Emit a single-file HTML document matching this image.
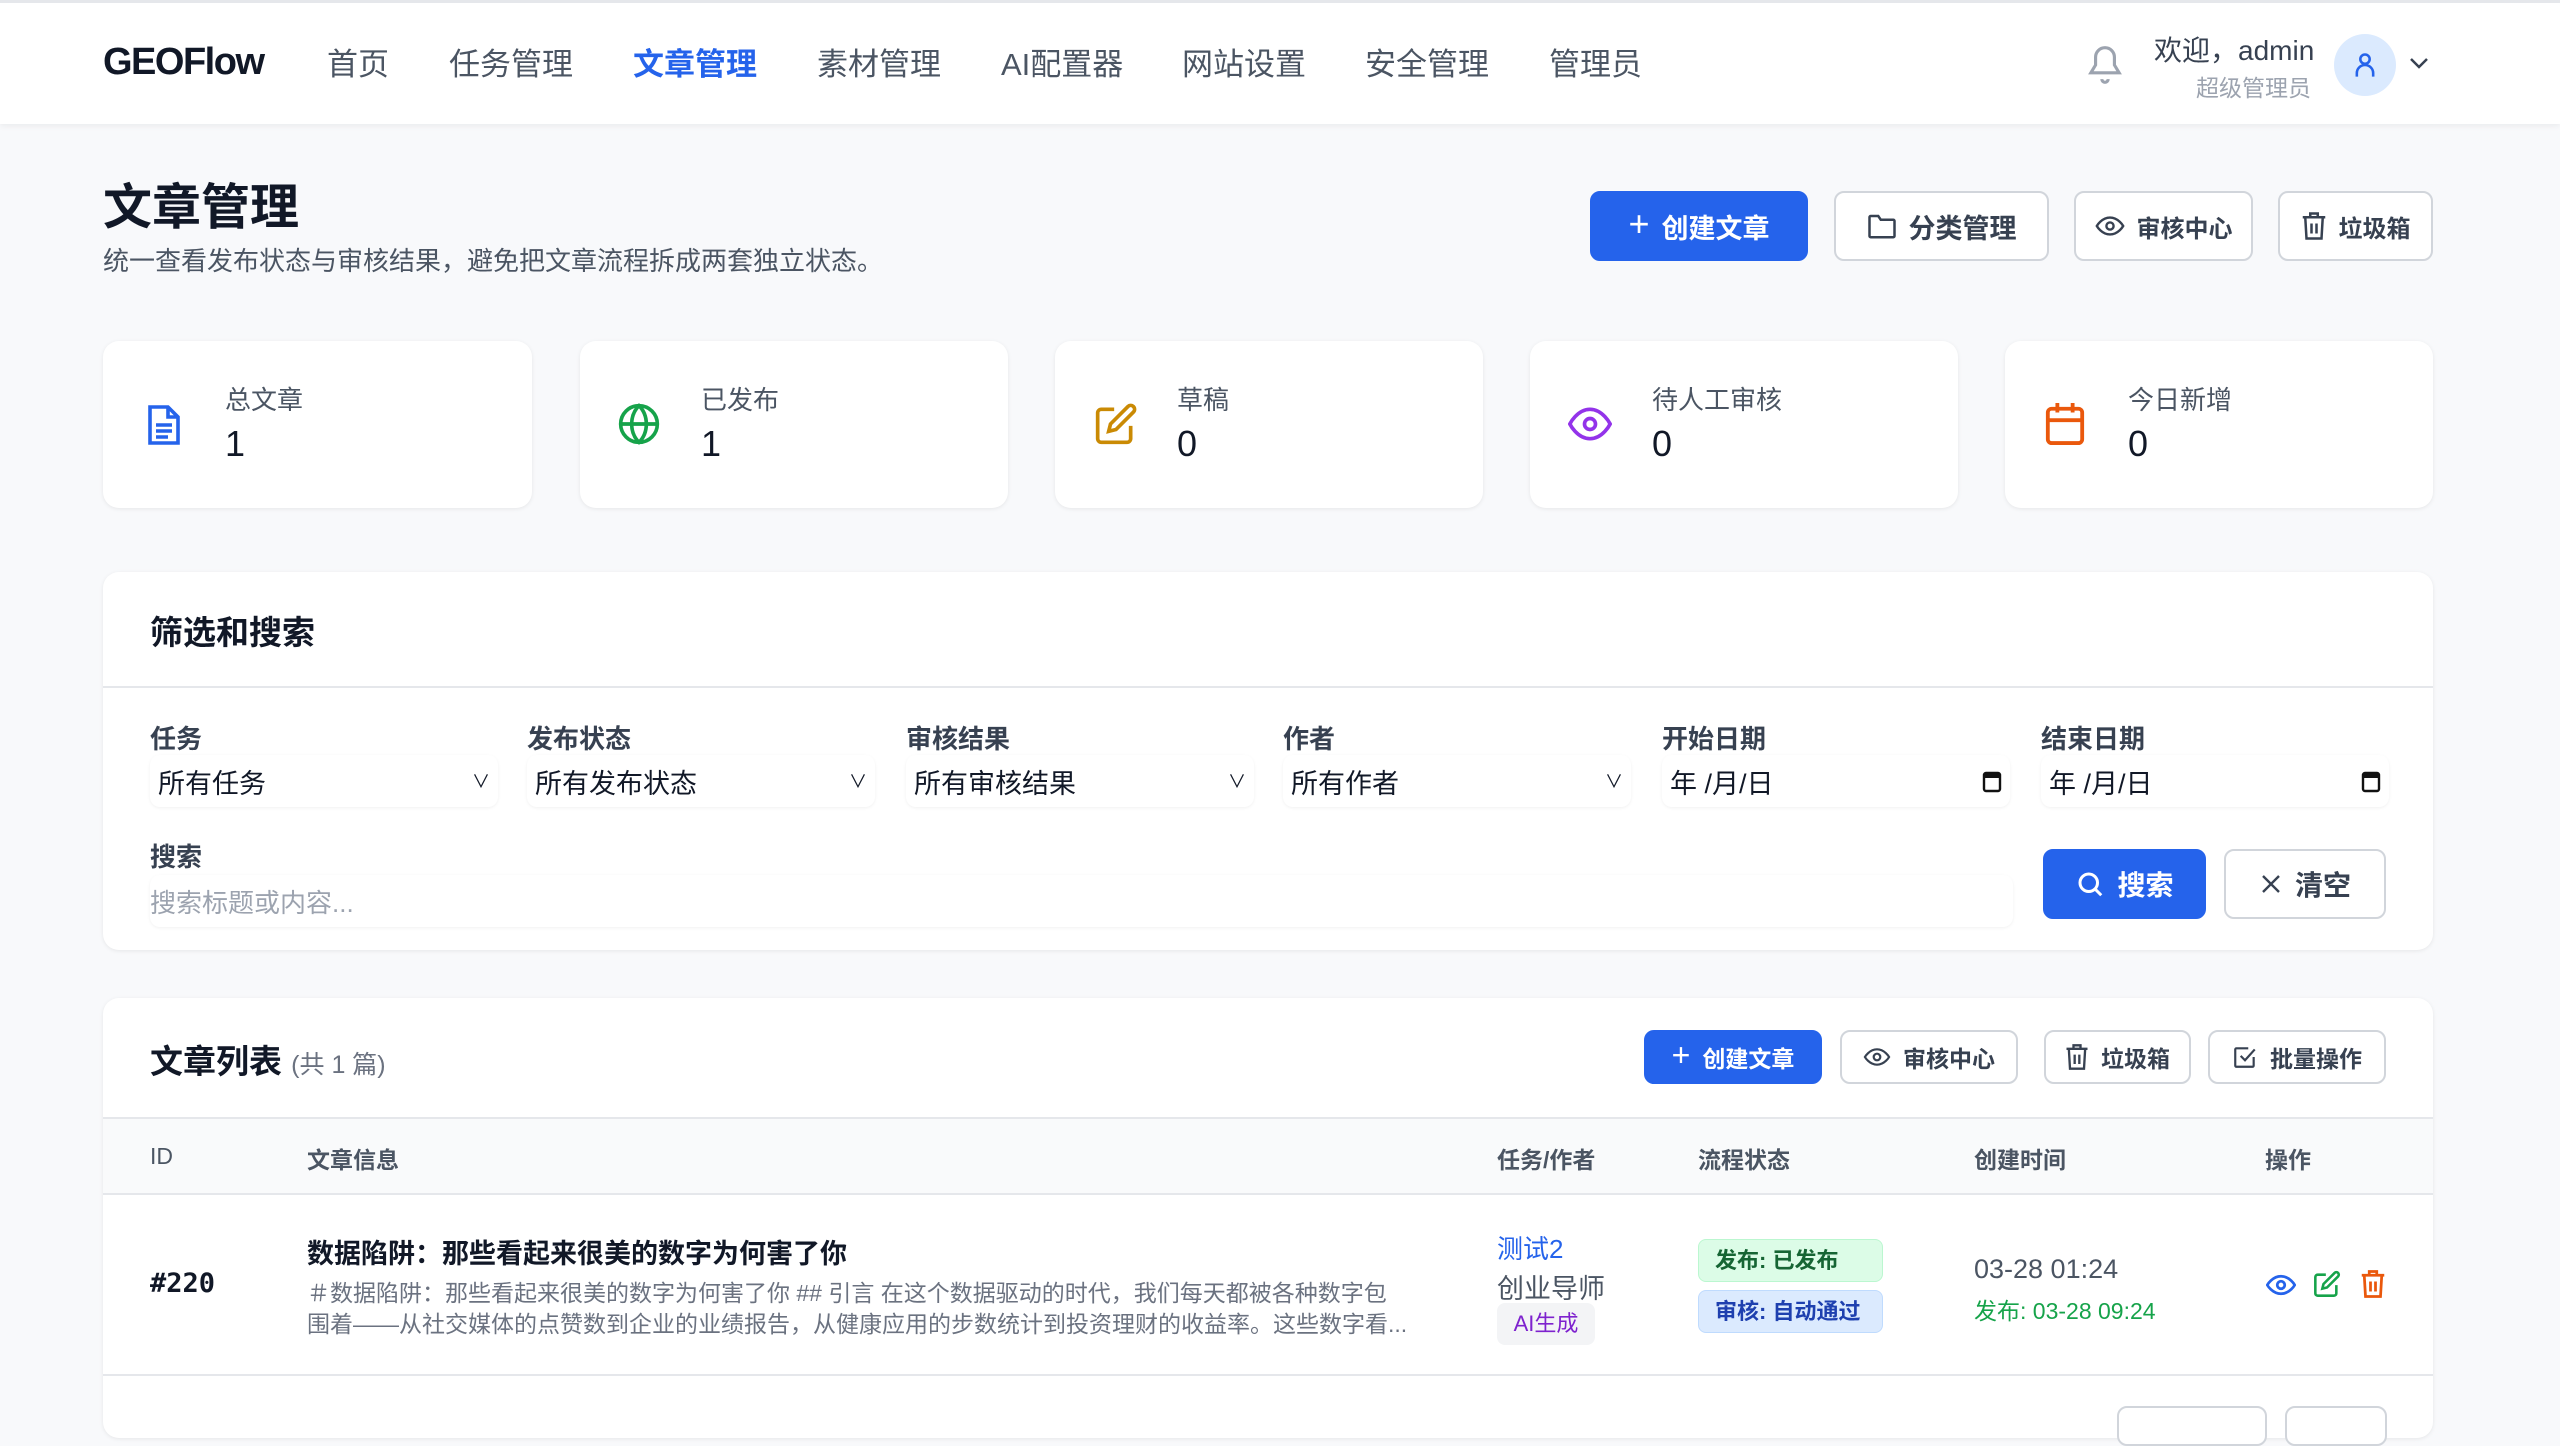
<!DOCTYPE html>
<html><head><meta charset="utf-8">
<style>
*{box-sizing:border-box;margin:0;padding:0}
body{width:2560px;height:1416px;overflow:hidden;background:#f8f9fb;font-family:"Liberation Sans","Noto Sans CJK SC",sans-serif;color:#111827;position:relative}
.a{position:absolute;white-space:nowrap}
.nav{position:absolute;left:0;top:0;width:2560px;height:124px;background:#fff;border-top:3px solid #e5e7eb;box-shadow:0 2px 6px rgba(0,0,0,.06)}
.ni{position:absolute;top:40px;font-size:31px;color:#4b5563;line-height:44px}
.card{position:absolute;background:#fff;border-radius:16px;box-shadow:0 1px 4px rgba(0,0,0,.08)}
.btn{position:absolute;border-radius:10px;border:2px solid #d1d5db;background:#fff;display:flex;align-items:center;justify-content:center;gap:12px;font-weight:700;color:#374151}
.btn.p{background:#2563eb;border-color:#2563eb;color:#fff}
.lbl{position:absolute;font-size:26px;font-weight:700;color:#374151}
.sel{position:absolute;height:52px;border-radius:10px;box-shadow:0 1px 3px rgba(0,0,0,.06);font-size:27px;color:#111827;padding:0 8px;display:flex;align-items:center;justify-content:space-between}
.th{position:absolute;top:1141px;font-size:23px;color:#4b5563;font-weight:700}
svg{display:block}
</style></head><body>
<div class="nav">
  <div class="a" style="left:103px;top:38px;font-size:38px;font-weight:700;color:#111827;letter-spacing:-1.5px">GEOFlow</div>
  <div class="ni" style="left:327px">首页</div>
  <div class="ni" style="left:449px">任务管理</div>
  <div class="ni" style="left:633px;color:#2563eb;font-weight:700">文章管理</div>
  <div class="ni" style="left:817px">素材管理</div>
  <div class="ni" style="left:1001px">AI配置器</div>
  <div class="ni" style="left:1182px">网站设置</div>
  <div class="ni" style="left:1365px">安全管理</div>
  <div class="ni" style="left:1549px">管理员</div>
  <svg class="a" style="left:2086px;top:40px" width="38" height="44" viewBox="0 0 24 28" fill="none" stroke="#9ca3af" stroke-width="2"><path d="M12 3a6 6 0 0 0-6 6v5l-3 5h18l-3-5V9a6 6 0 0 0-6-6z"/><path d="M10 23a2 2 0 0 0 4 0"/></svg>
  <div class="a" style="left:2154px;top:26px;font-size:28px;color:#374151">欢迎，admin</div>
  <div class="a" style="left:2196px;top:66px;font-size:23px;color:#9ca3af">超级管理员</div>
  <div class="a" style="left:2334px;top:31px;width:62px;height:62px;border-radius:50%;background:#dbeafe"></div>
  <svg class="a" style="left:2351px;top:48px" width="28" height="28" viewBox="0 0 24 24" fill="none" stroke="#2563eb" stroke-width="2.2"><circle cx="12" cy="7" r="4"/><path d="M5 22v-3a7 7 0 0 1 14 0v3"/></svg>
  <svg class="a" style="left:2408px;top:52px" width="22" height="16" viewBox="0 0 22 16" fill="none" stroke="#374151" stroke-width="2.5"><path d="M3 4l8 8 8-8"/></svg>
</div>

<div class="a" style="left:103px;top:168px;font-size:49px;font-weight:700">文章管理</div>
<div class="a" style="left:103px;top:241px;font-size:26px;color:#4b5563">统一查看发布状态与审核结果，避免把文章流程拆成两套独立状态。</div>

<div class="btn p" style="left:1590px;top:191px;width:218px;height:70px;font-size:27px"><span style="font-size:36px;font-weight:400;margin-top:-4px">+</span>创建文章</div>
<div class="btn" style="left:1834px;top:191px;width:215px;height:70px;font-size:27px"><svg width="30" height="28" viewBox="0 0 24 22" fill="none" stroke="#374151" stroke-width="2"><path d="M2 4a1 1 0 0 1 1-1h6l2 3h10a1 1 0 0 1 1 1v12a1 1 0 0 1-1 1H3a1 1 0 0 1-1-1z"/></svg>分类管理</div>
<div class="btn" style="left:2074px;top:191px;width:179px;height:70px;font-size:24px"><svg width="30" height="24" viewBox="0 0 24 20" fill="none" stroke="#374151" stroke-width="2"><path d="M1 10s4-7 11-7 11 7 11 7-4 7-11 7S1 10 1 10z"/><circle cx="12" cy="10" r="3"/></svg>审核中心</div>
<div class="btn" style="left:2278px;top:191px;width:155px;height:70px;font-size:24px"><svg width="26" height="30" viewBox="0 0 20 24" fill="none" stroke="#374151" stroke-width="2"><path d="M1 5h18M7 5V2h6v3M3 5l1 17h12l1-17M8 10v8M12 10v8"/></svg>垃圾箱</div>

<div class="card" style="left:103px;top:341px;width:429px;height:167px"></div>
<div class="card" style="left:580px;top:341px;width:428px;height:167px"></div>
<div class="card" style="left:1055px;top:341px;width:428px;height:167px"></div>
<div class="card" style="left:1530px;top:341px;width:428px;height:167px"></div>
<div class="card" style="left:2005px;top:341px;width:428px;height:167px"></div>

<svg class="a" style="left:146px;top:403px" width="36" height="44" viewBox="0 0 18 22" fill="none" stroke="#2563eb" stroke-width="1.8"><path d="M2 2h9l5 5v13H2z"/><path d="M11 2v5h5M5 11h8M5 14h8M5 17h6"/></svg>
<div class="a" style="left:225px;top:380px;font-size:26px;color:#4b5563">总文章</div>
<div class="a" style="left:225px;top:423px;font-size:36px">1</div>

<svg class="a" style="left:617px;top:402px" width="44" height="44" viewBox="0 0 24 24" fill="none" stroke="#16a34a" stroke-width="2"><circle cx="12" cy="12" r="10"/><path d="M2 12h20M12 2c3 3 4 6.5 4 10s-1 7-4 10c-3-3-4-6.5-4-10s1-7 4-10z"/></svg>
<div class="a" style="left:701px;top:380px;font-size:26px;color:#4b5563">已发布</div>
<div class="a" style="left:701px;top:423px;font-size:36px">1</div>

<svg class="a" style="left:1094px;top:402px" width="44" height="44" viewBox="0 0 24 24" fill="none" stroke="#ca8a04" stroke-width="2"><path d="M11 4H4a2 2 0 0 0-2 2v14a2 2 0 0 0 2 2h14a2 2 0 0 0 2-2v-7"/><path d="M18.5 2.5a2.1 2.1 0 0 1 3 3L12 15l-4 1 1-4z"/></svg>
<div class="a" style="left:1177px;top:380px;font-size:26px;color:#4b5563">草稿</div>
<div class="a" style="left:1177px;top:423px;font-size:36px">0</div>

<svg class="a" style="left:1568px;top:402px" width="44" height="44" viewBox="0 0 24 24" fill="none" stroke="#9333ea" stroke-width="2"><path d="M1 12s4-8 11-8 11 8 11 8-4 8-11 8-11-8-11-8z"/><circle cx="12" cy="12" r="3"/></svg>
<div class="a" style="left:1652px;top:380px;font-size:26px;color:#4b5563">待人工审核</div>
<div class="a" style="left:1652px;top:423px;font-size:36px">0</div>

<svg class="a" style="left:2044px;top:401px" width="42" height="46" viewBox="0 0 22 24" fill="none" stroke="#ea580c" stroke-width="2"><rect x="2" y="4" width="18" height="18" rx="2"/><path d="M2 10h18M7 1v5M15 1v5"/></svg>
<div class="a" style="left:2128px;top:380px;font-size:26px;color:#4b5563">今日新增</div>
<div class="a" style="left:2128px;top:423px;font-size:36px">0</div>

<div class="card" style="left:103px;top:572px;width:2330px;height:378px"></div>
<div class="a" style="left:150px;top:606px;font-size:33px;font-weight:700">筛选和搜索</div>
<div class="a" style="left:103px;top:686px;width:2330px;height:2px;background:#e5e7eb"></div>

<div class="lbl" style="left:150px;top:719px">任务</div>
<div class="lbl" style="left:527px;top:719px">发布状态</div>
<div class="lbl" style="left:906px;top:719px">审核结果</div>
<div class="lbl" style="left:1283px;top:719px">作者</div>
<div class="lbl" style="left:1662px;top:719px">开始日期</div>
<div class="lbl" style="left:2041px;top:719px">结束日期</div>

<div class="sel" style="left:150px;top:755px;width:348px">所有任务<span style="font-size:18px">∨</span></div>
<div class="sel" style="left:527px;top:755px;width:348px">所有发布状态<span style="font-size:18px">∨</span></div>
<div class="sel" style="left:906px;top:755px;width:348px">所有审核结果<span style="font-size:18px">∨</span></div>
<div class="sel" style="left:1283px;top:755px;width:348px">所有作者<span style="font-size:18px">∨</span></div>
<div class="sel" style="left:1662px;top:755px;width:348px">年 /月/日<svg width="20" height="24" viewBox="0 0 20 24"><rect x="2" y="4" width="16" height="18" rx="2" fill="none" stroke="#111" stroke-width="2.4"/><rect x="2" y="4" width="16" height="5" fill="#111"/></svg></div>
<div class="sel" style="left:2041px;top:755px;width:348px">年 /月/日<svg width="20" height="24" viewBox="0 0 20 24"><rect x="2" y="4" width="16" height="18" rx="2" fill="none" stroke="#111" stroke-width="2.4"/><rect x="2" y="4" width="16" height="5" fill="#111"/></svg></div>

<div class="lbl" style="left:150px;top:837px">搜索</div>
<div class="sel" style="left:150px;top:875px;width:1863px;color:#9ca3af;font-size:26px;padding-left:0">搜索标题或内容...</div>

<div class="btn p" style="left:2043px;top:849px;width:163px;height:70px;font-size:28px"><svg width="30" height="30" viewBox="0 0 24 24" fill="none" stroke="#fff" stroke-width="2.4"><circle cx="11" cy="11" r="7"/><path d="M16 16l5 5"/></svg>搜索</div>
<div class="btn" style="left:2224px;top:849px;width:162px;height:70px;font-size:28px"><svg width="24" height="24" viewBox="0 0 24 24" fill="none" stroke="#374151" stroke-width="2.4"><path d="M4 4l16 16M20 4L4 20"/></svg>清空</div>

<div class="card" style="left:103px;top:998px;width:2330px;height:440px"></div>
<div class="a" style="left:150px;top:1035px;font-size:33px;font-weight:700">文章列表 <span style="font-size:25px;color:#6b7280;font-weight:400">(共 1 篇)</span></div>

<div class="btn p" style="left:1644px;top:1030px;width:178px;height:54px;font-size:23px"><span style="font-size:32px;font-weight:400;margin-top:-4px">+</span>创建文章</div>
<div class="btn" style="left:1840px;top:1030px;width:178px;height:54px;font-size:23px"><svg width="28" height="22" viewBox="0 0 24 20" fill="none" stroke="#374151" stroke-width="2"><path d="M1 10s4-7 11-7 11 7 11 7-4 7-11 7S1 10 1 10z"/><circle cx="12" cy="10" r="3"/></svg>审核中心</div>
<div class="btn" style="left:2044px;top:1030px;width:147px;height:54px;font-size:23px"><svg width="24" height="28" viewBox="0 0 20 24" fill="none" stroke="#374151" stroke-width="2"><path d="M1 5h18M7 5V2h6v3M3 5l1 17h12l1-17M8 10v8M12 10v8"/></svg>垃圾箱</div>
<div class="btn" style="left:2208px;top:1030px;width:178px;height:54px;font-size:23px"><svg width="26" height="26" viewBox="0 0 24 24" fill="none" stroke="#374151" stroke-width="2"><path d="M20 12v8a1 1 0 0 1-1 1H4a1 1 0 0 1-1-1V5a1 1 0 0 1 1-1h11"/><path d="M8 11l4 4 9-10"/></svg>批量操作</div>

<div class="a" style="left:103px;top:1117px;width:2330px;height:78px;background:#f9fafb;border-top:2px solid #e5e7eb;border-bottom:2px solid #e5e7eb"></div>
<div class="th" style="left:150px;top:1143px;font-weight:400">ID</div>
<div class="th" style="left:307px">文章信息</div>
<div class="th" style="left:1497px">任务/作者</div>
<div class="th" style="left:1698px">流程状态</div>
<div class="th" style="left:1974px">创建时间</div>
<div class="th" style="left:2265px">操作</div>

<div class="a" style="left:150px;top:1268px;font-size:27px;font-weight:700;font-family:'DejaVu Sans Mono',monospace">#220</div>
<div class="a" style="left:307px;top:1232px;font-size:27px;font-weight:700">数据陷阱：那些看起来很美的数字为何害了你</div>
<div class="a" style="left:307px;top:1278px;font-size:23px;color:#6b7280;line-height:31px">＃数据陷阱：那些看起来很美的数字为何害了你 ## 引言 在这个数据驱动的时代，我们每天都被各种数字包<br>围着——从社交媒体的点赞数到企业的业绩报告，从健康应用的步数统计到投资理财的收益率。这些数字看...</div>

<div class="a" style="left:1497px;top:1229px;font-size:26px;color:#2563eb">测试2</div>
<div class="a" style="left:1497px;top:1267px;font-size:27px;color:#4b5563">创业导师</div>
<div class="a" style="left:1497px;top:1303px;width:98px;height:42px;border-radius:8px;background:#f3f4f6;color:#7e22ce;font-size:22px;text-align:center;line-height:42px">AI生成</div>

<div class="a" style="left:1698px;top:1239px;width:185px;height:43px;border-radius:8px;background:#dcfce7;border:1px solid #bbf7d0;color:#166534;font-size:22px;font-weight:700;padding-left:16px;line-height:41px">发布: 已发布</div>
<div class="a" style="left:1698px;top:1290px;width:185px;height:43px;border-radius:8px;background:#dbeafe;border:1px solid #bfdbfe;color:#1e40af;font-size:22px;font-weight:700;padding-left:16px;line-height:41px">审核: 自动通过</div>

<div class="a" style="left:1974px;top:1254px;font-size:27px;color:#4b5563">03-28 01:24</div>
<div class="a" style="left:1974px;top:1292px;font-size:23px;color:#16a34a">发布: 03-28 09:24</div>

<svg class="a" style="left:2266px;top:1272px" width="30" height="26" viewBox="0 0 24 20" fill="none" stroke="#2563eb" stroke-width="2.2"><path d="M1 10s4-7 11-7 11 7 11 7-4 7-11 7S1 10 1 10z"/><circle cx="12" cy="10" r="3"/></svg>
<svg class="a" style="left:2313px;top:1270px" width="28" height="28" viewBox="0 0 24 24" fill="none" stroke="#16a34a" stroke-width="2.2"><path d="M11 4H4a2 2 0 0 0-2 2v14a2 2 0 0 0 2 2h14a2 2 0 0 0 2-2v-7"/><path d="M18.5 2.5a2.1 2.1 0 0 1 3 3L12 15l-4 1 1-4z"/></svg>
<svg class="a" style="left:2360px;top:1269px" width="26" height="30" viewBox="0 0 20 24" fill="none" stroke="#ea580c" stroke-width="2.2"><path d="M1 5h18M7 5V2h6v3M3 5l1 17h12l1-17M8 10v8M12 10v8"/></svg>

<div class="a" style="left:103px;top:1374px;width:2330px;height:2px;background:#e5e7eb"></div>
<div class="a" style="left:2117px;top:1406px;width:150px;height:40px;border:2px solid #d1d5db;border-radius:10px;background:#fff"></div>
<div class="a" style="left:2285px;top:1406px;width:102px;height:40px;border:2px solid #d1d5db;border-radius:10px;background:#fff"></div>
</body></html>
